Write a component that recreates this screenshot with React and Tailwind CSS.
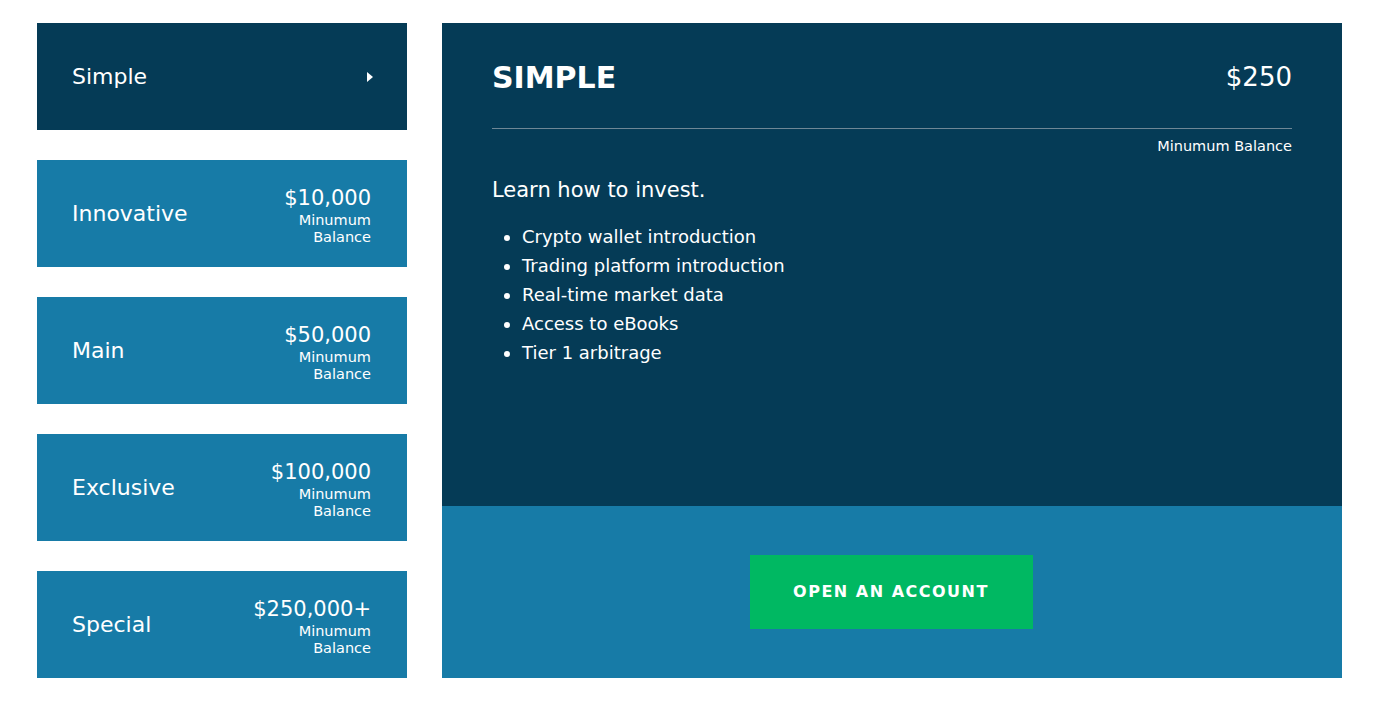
const plans = [
  { name: 'Innovative', price: '$10,000' },
  { name: 'Main', price: '$50,000' },
  { name: 'Exclusive', price: '$100,000' },
  { name: 'Special', price: '$250,000+' },
];

const features = [
  'Crypto wallet introduction',
  'Trading platform introduction',
  'Real-time market data',
  'Access to eBooks',
  'Tier 1 arbitrage',
];

export default function App() {
  return (
    <div className="bg-white min-h-[708px] pt-[23px] pl-[37px] text-white font-['DejaVu_Sans',sans-serif]">
      <div className="flex gap-[35px]">
        <div className="w-[370px] flex flex-col gap-[30px]">
          <div className="h-[107px] bg-[#053b56] flex items-center justify-between pl-[35px] pr-[34px]">
            <span className="text-[22px]">Simple</span>
            <svg width="6" height="10" viewBox="0 0 6 10" className="fill-white">
              <path d="M0 0 L6 5 L0 10 Z" />
            </svg>
          </div>
          {plans.map((p) => (
            <div
              key={p.name}
              className="h-[107px] bg-[#177ba7] flex items-center justify-between pl-[35px] pr-[36px]"
            >
              <span className="text-[22px]">{p.name}</span>
              <div className="text-right pt-[2px]">
                <div className="text-[21px] leading-[28px]">{p.price}</div>
                <div className="text-[14.5px] leading-[17px] w-[90px] ml-auto">Minumum Balance</div>
              </div>
            </div>
          ))}
        </div>

        <div className="w-[900px] flex flex-col">
          <div className="h-[483px] bg-[#053b56] px-[50px] pt-[36px]">
            <div className="flex items-center justify-between h-[36px]">
              <h2 className="text-[30px] font-bold">SIMPLE</h2>
              <span className="text-[26px]">$250</span>
            </div>
            <div className="mt-[33px] border-t border-[#6f8796]"></div>
            <div className="text-right text-[14.5px] mt-[7px]">Minumum Balance</div>
            <p className="text-[21px] mt-[17px]">Learn how to invest.</p>
            <ul className="list-disc pl-[30px] mt-[16px] text-[18px] leading-[29px]">
              {features.map((f) => (
                <li key={f}>{f}</li>
              ))}
            </ul>
          </div>
          <div className="h-[172px] bg-[#177ba7] flex items-center justify-center">
            <button className="w-[283px] h-[74px] bg-[#00b862] text-[16px] font-bold tracking-[1.5px] -ml-[2px]">
              OPEN AN ACCOUNT
            </button>
          </div>
        </div>
      </div>
    </div>
  );
}
